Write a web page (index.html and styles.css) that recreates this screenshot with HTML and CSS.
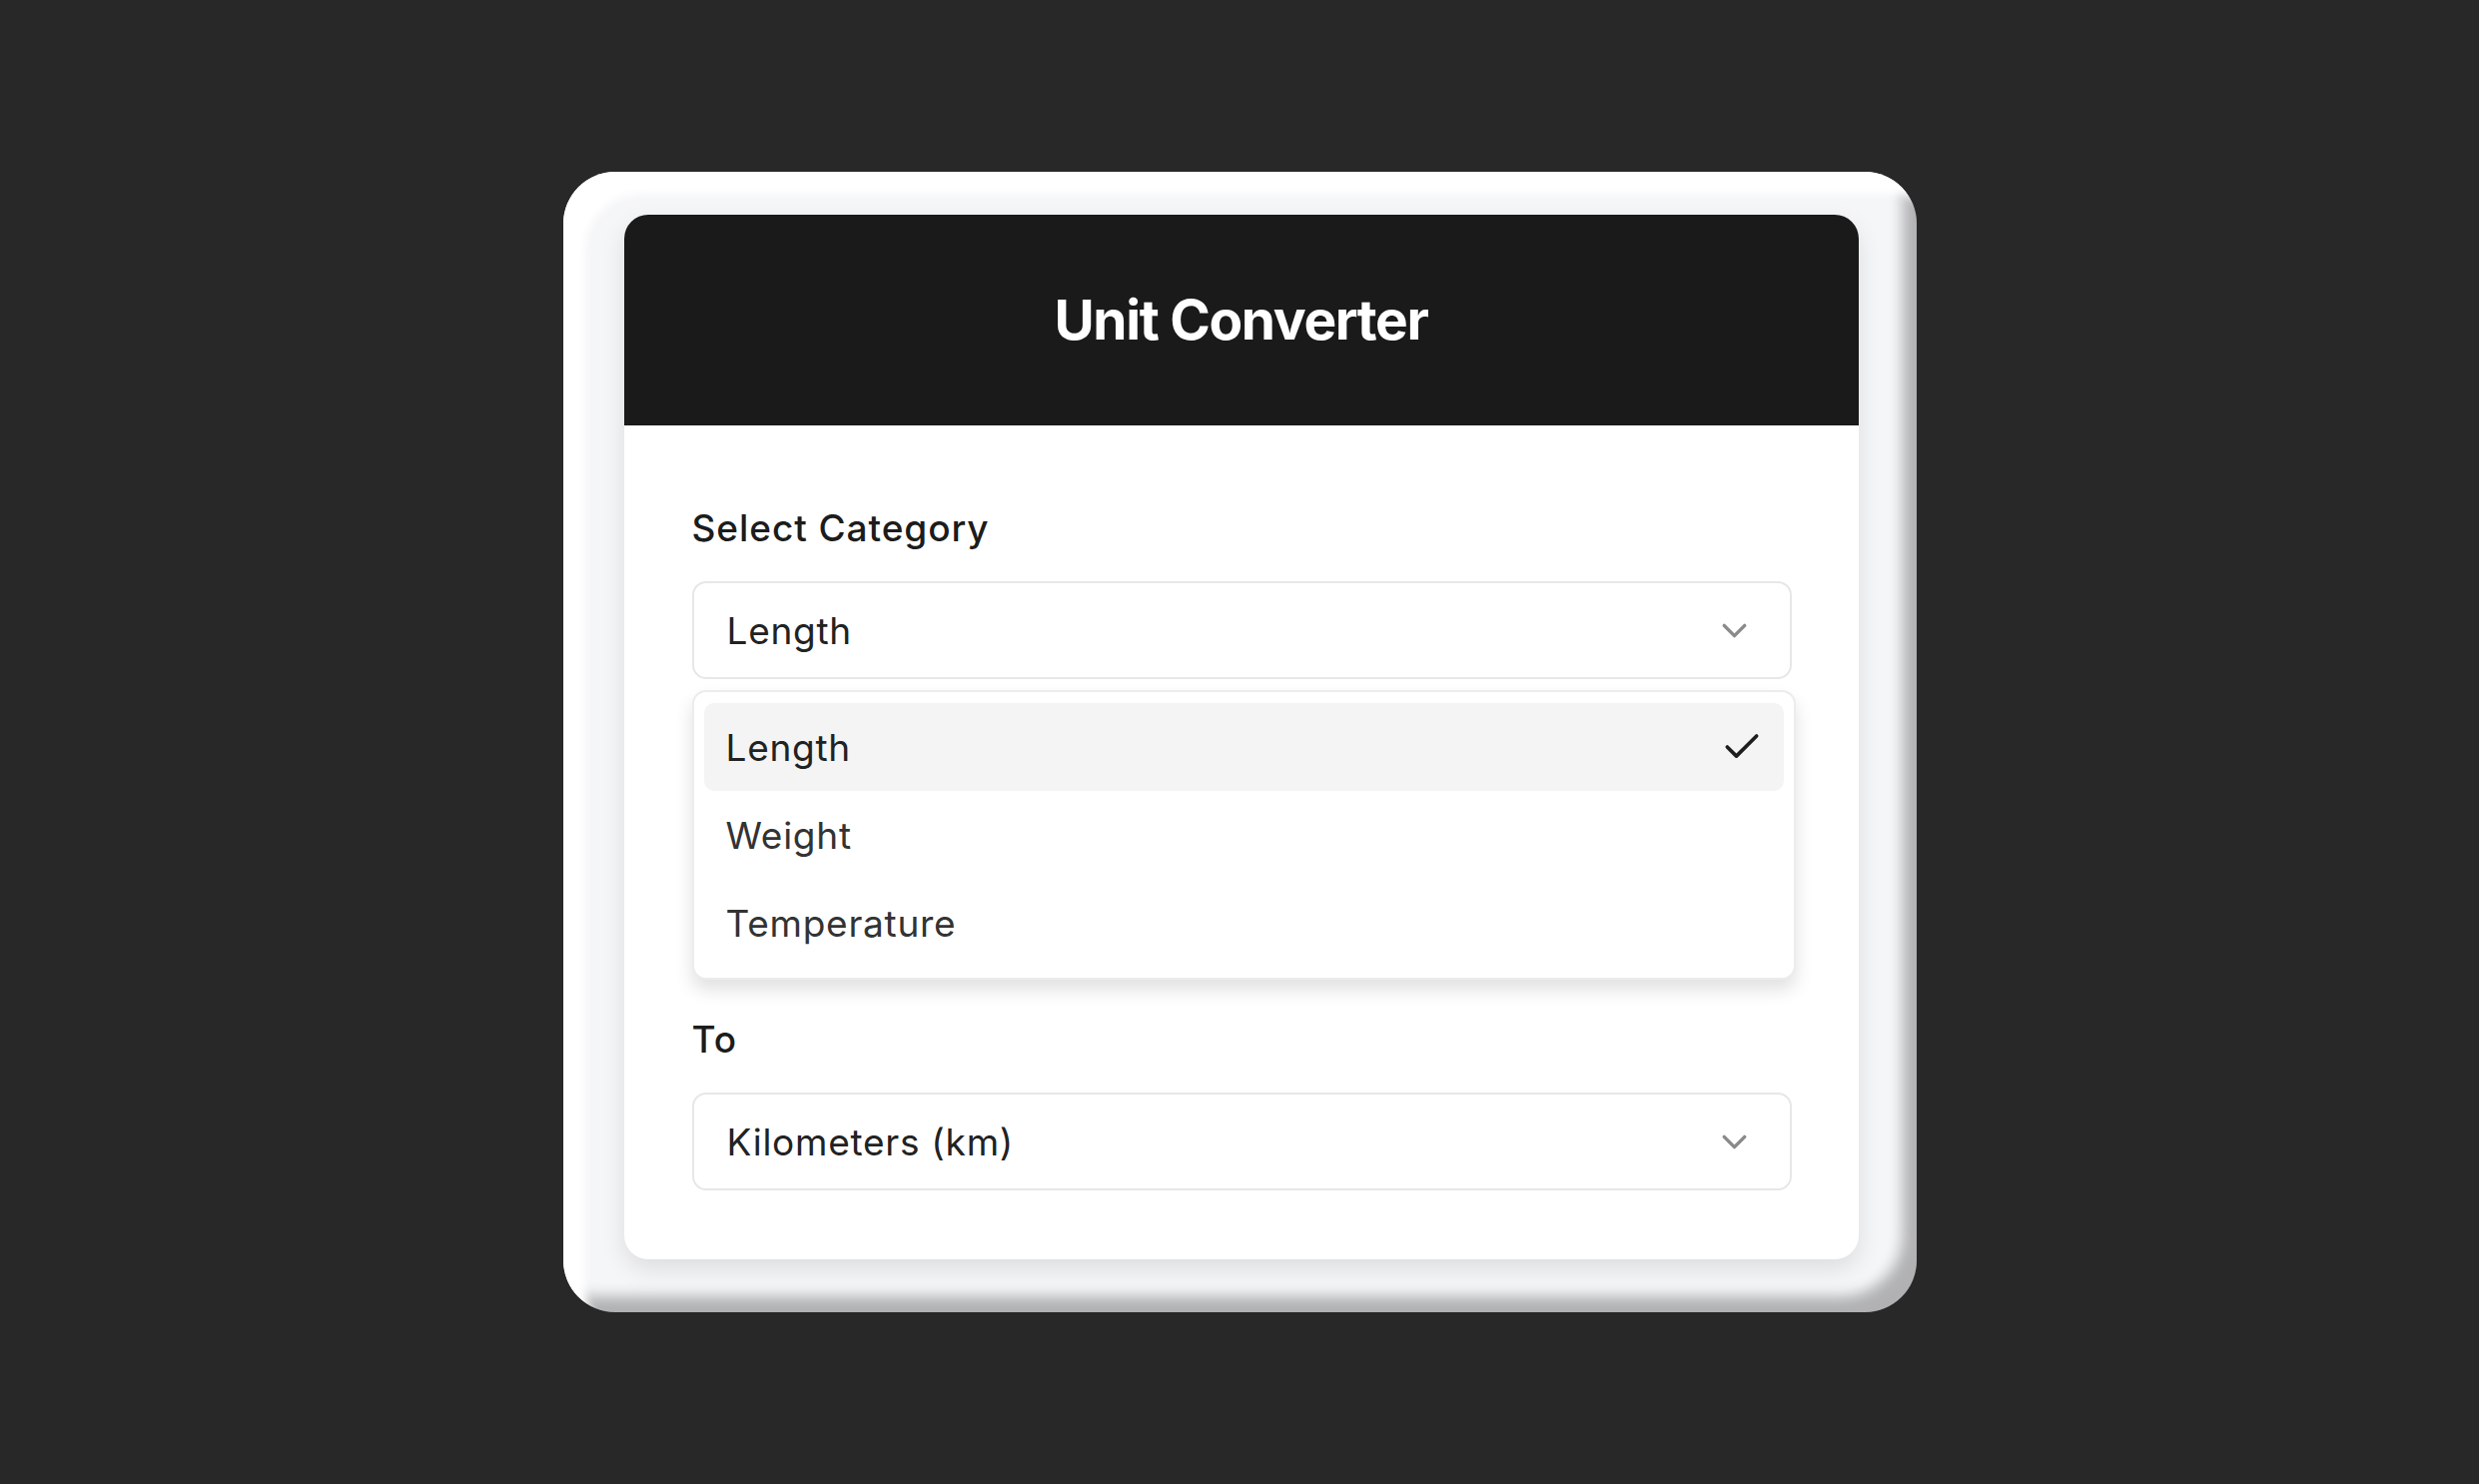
FILE: index.html
```html
<!DOCTYPE html>
<html lang="en">
<head>
<meta charset="utf-8">
<title>Unit Converter</title>
<link rel="stylesheet" href="styles.css">
</head>
<body>
<div class="frame">
  <div class="card">
    <header class="header">
      <h1 class="title">Unit Converter</h1>
    </header>
    <div class="body">
      <div class="group">
        <label class="label">Select Category</label>
        <div class="select-wrap">
          <button class="select" type="button">
            <span class="value">Length</span>
            <svg class="chev" width="41" height="41" viewBox="0 0 24 24" fill="none" stroke="currentColor" stroke-width="2" stroke-linecap="round" stroke-linejoin="round"><path d="m6 9 6 6 6-6"/></svg>
          </button>
          <div class="menu">
            <div class="item active">
              <span>Length</span>
              <svg class="check" width="44" height="44" viewBox="0 0 24 24" fill="none" stroke="currentColor" stroke-width="2" stroke-linecap="round" stroke-linejoin="round"><path d="M20 6 9 17l-5-5"/></svg>
            </div>
            <div class="item"><span>Weight</span></div>
            <div class="item"><span>Temperature</span></div>
          </div>
        </div>
      </div>
      <div class="covered" aria-hidden="true"></div>
      <div class="group">
        <label class="label">To</label>
        <button class="select" type="button">
          <span class="value">Kilometers (km)</span>
          <svg class="chev" width="41" height="41" viewBox="0 0 24 24" fill="none" stroke="currentColor" stroke-width="2" stroke-linecap="round" stroke-linejoin="round"><path d="m6 9 6 6 6-6"/></svg>
        </button>
      </div>
    </div>
  </div>
</div>
</body>
</html>
```
FILE: styles.css
```css
* { box-sizing: border-box; }

html, body {
  margin: 0;
  height: 100%;
}

body {
  background: #282828;
  font-family: Inter, "Noto Sans", "Liberation Sans", sans-serif;
  display: flex;
  align-items: center;
  justify-content: center;
}

.frame {
  width: 1355px;
  padding: 43px 58px 53px 61px;
  border-radius: 52px;
  background: #f5f6f8;
  box-shadow:
    inset 26px 26px 8px -4px #ffffff,
    inset -24px -26px 14px -10px rgba(0, 0, 0, 0.28);
}

.card {
  background: #ffffff;
  border-radius: 24px;
  box-shadow: 0 10px 24px rgba(0, 0, 0, 0.10);
  display: flex;
  flex-direction: column;
}

.header {
  height: 211px;
  background: #1a1a1a;
  border-radius: 24px 24px 0 0;
  display: flex;
  align-items: center;
  justify-content: center;
}

.title {
  margin: 0;
  color: #ffffff;
  font-size: 55px;
  font-weight: 700;
  letter-spacing: -0.025em;
  line-height: 1;
}

.body {
  padding: 78px 67px 69px 68px;
  display: flex;
  flex-direction: column;
  gap: 80px;
}

.group {
  display: flex;
  flex-direction: column;
  gap: 29px;
}

.covered {
  height: 176px;
}

.label {
  font-size: 37px;
  line-height: 49px;
  font-weight: 500;
  letter-spacing: 0.025em;
  color: #1c1c1c;
}

.select-wrap {
  position: relative;
}

.select {
  width: 100%;
  height: 98px;
  display: flex;
  align-items: center;
  justify-content: space-between;
  padding: 0 35px 0 33px;
  background: #ffffff;
  border: 2px solid #e7e7e7;
  border-radius: 14px;
  font-family: inherit;
  font-size: 37px;
  letter-spacing: 0.02em;
  color: #222222;
  text-align: left;
}

.chev {
  color: #8a8a8a;
  flex: none;
}

.menu {
  position: absolute;
  top: calc(100% + 11px);
  left: 0;
  right: -4px;
  z-index: 5;
  background: #ffffff;
  border: 2px solid #ececec;
  border-radius: 14px;
  padding: 11px 10px;
  box-shadow: 0 10px 18px rgba(0, 0, 0, 0.12);
  display: flex;
  flex-direction: column;
}

.item {
  height: 88px;
  display: flex;
  align-items: center;
  justify-content: space-between;
  padding: 0 20px 0 22px;
  border-radius: 10px;
  font-size: 37px;
  letter-spacing: 0.02em;
  color: #333333;
}

.item.active {
  background: #f4f4f4;
  color: #222222;
}

.check {
  color: #1e1e1e;
  flex: none;
}
```
